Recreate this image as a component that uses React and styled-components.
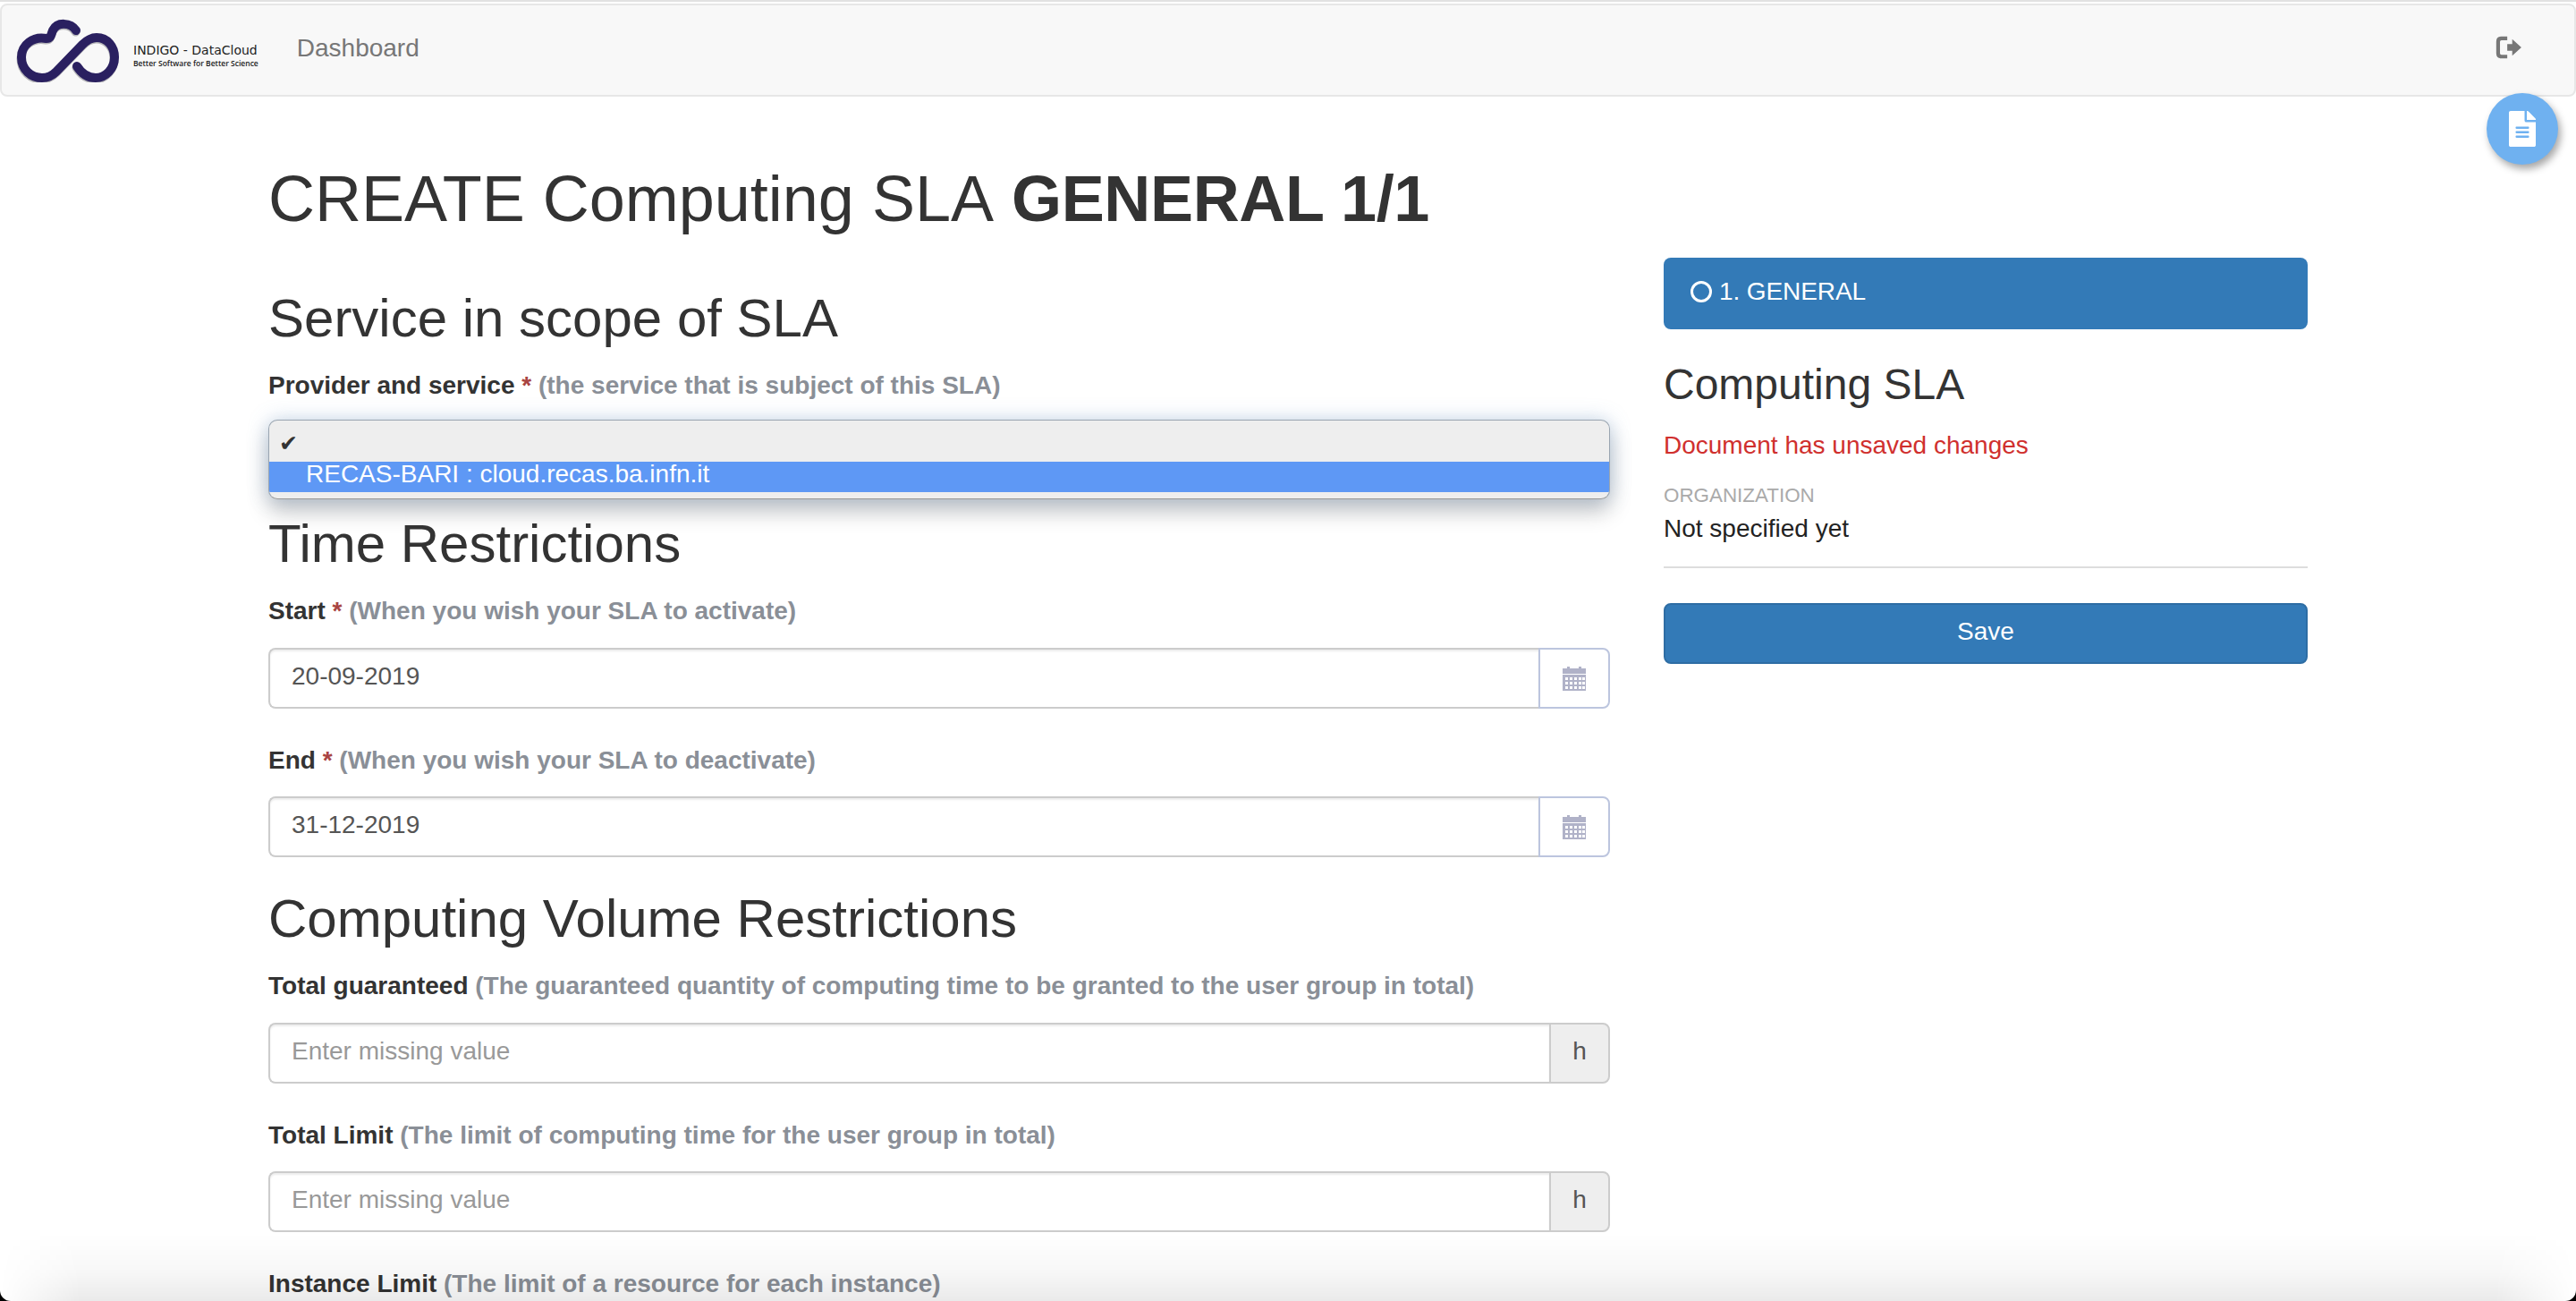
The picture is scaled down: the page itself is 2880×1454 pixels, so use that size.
import React from "react";
import styled, { createGlobalStyle } from "styled-components";
import { FaFileAlt } from "react-icons/fa";

const GlobalStyle = createGlobalStyle`
  html, body {
    margin: 0;
    padding: 0;
    height: 100%;
    overflow: hidden;
    background: #fff;
  }
  body {
    font-family: "Liberation Sans", Arial, sans-serif;
    font-size: 28px;
    color: #333;
  }
  * { box-sizing: border-box; }
`;

const Page = styled.div`
  position: relative;
  height: 1454px;
  overflow: hidden;
  padding-top: 4px;
  border-top: 2px solid #e2e2e2;
`;

const Navbar = styled.nav`
  display: flex;
  align-items: center;
  height: 104px;
  margin-top: -2px;
  background: #f8f8f8;
  border: 2px solid #e7e7e7;
  border-radius: 8px;
  padding: 0 58px 0 16px;
`;

const Brand = styled.div`
  display: flex;
  align-items: center;
  gap: 13px;
`;

const BrandText = styled.div`
  display: flex;
  flex-direction: column;
  margin-top: 12px;
  color: #222;
`;

const BrandName = styled.span`
  font-family: "DejaVu Sans", sans-serif;
  font-size: 14px;
  line-height: 18px;
  white-space: nowrap;
`;

const BrandTag = styled.span`
  font-family: "Open Sans", sans-serif;
  font-size: 8.5px;
  font-weight: 600;
  line-height: 12px;
  white-space: nowrap;
`;

const NavLink = styled.a`
  margin: -4px 0 0 43px;
  font-size: 28px;
  color: #777;
`;

const NavRight = styled.div`
  margin: -6px 0 0 auto;
  display: flex;
  color: #777;
`;

const FloatButton = styled.div`
  position: absolute;
  left: 2780px;
  top: 102px;
  width: 80px;
  height: 80px;
  border-radius: 50%;
  background: #6fb1f0;
  color: #fff;
  display: flex;
  align-items: center;
  justify-content: center;
  box-shadow: 3px 5px 8px rgba(0, 0, 0, 0.35);
  font-size: 40px;
`;

const Container = styled.main`
  width: 2280px;
  margin-left: 300px;
`;

const Title = styled.h1`
  margin: 75px 0 26px;
  font-size: 72px;
  font-weight: 500;
  line-height: 79px;
  color: #333;
  b {
    font-weight: 700;
    margin-left: 4px;
    letter-spacing: -0.35px;
  }
`;

const Columns = styled.div`
  display: grid;
  grid-template-columns: 1500px 720px;
  column-gap: 60px;
  align-items: start;
`;

const FormColumn = styled.div`
  padding-top: 35px;
`;

const SectionTitle = styled.h2`
  margin: 0;
  font-size: 60px;
  font-weight: 500;
  line-height: 66px;
  color: #333;
`;

const FieldLabel = styled.label`
  display: block;
  margin-top: ${(p) => p.$top}px;
  margin-bottom: ${(p) => p.$bottom}px;
  font-size: 28px;
  font-weight: 700;
  line-height: 40px;
  color: #333;
`;

const Star = styled.span`
  color: #a94442;
`;

const Hint = styled.span`
  color: #8a8f97;
`;

const OpenSelect = styled.div`
  height: 89px;
  margin-bottom: 17px;
  background: #eee;
  border-radius: 10px;
  border: 1px solid #9aa5b1;
  border-bottom-color: #999;
  box-shadow: 0 0 22px rgba(102, 150, 200, 0.35), 0 14px 24px rgba(0, 0, 0, 0.22);
  overflow: hidden;
  display: flex;
  flex-direction: column;
  font-size: 28px;
`;

const SelectCheck = styled.div`
  height: 46px;
  padding: 8px 0 0 11px;
  line-height: 36px;
  font-size: 25px;
  color: #333;
  font-family: "DejaVu Sans", sans-serif;
`;

const SelectOption = styled.div`
  height: 34px;
  padding-left: 41px;
  line-height: 28px;
  background: #5e98f5;
  color: #fff;
`;

const InputGroup = styled.div`
  display: flex;
  height: 68px;
`;

const TextBox = styled.div`
  flex: 1;
  display: flex;
  align-items: center;
  padding: 0 24px 4px;
  border: 2px solid #ccc;
  border-right: 0;
  border-radius: 8px 0 0 8px;
  box-shadow: inset 0 2px 2px rgba(0, 0, 0, 0.075);
  font-size: 28px;
  color: ${(p) => (p.$placeholder ? "#999" : "#555")};
`;

const Addon = styled.div`
  width: ${(p) => (p.$unit ? 68 : 80)}px;
  display: flex;
  align-items: center;
  justify-content: center;
  padding-bottom: ${(p) => (p.$unit ? 4 : 0)}px;
  border: 2px solid ${(p) => (p.$unit ? "#ccc" : "#bcc5de")};
  border-radius: 0 8px 8px 0;
  background: ${(p) => (p.$unit ? "#eee" : "#fff")};
  color: #555;
  font-size: 28px;
`;

const VolumeTitle = styled(SectionTitle)`
  margin-top: 36px;
`;

const Sidebar = styled.aside`
  display: flex;
  flex-direction: column;
`;

const StepPanel = styled.div`
  display: flex;
  align-items: center;
  gap: 8px;
  height: 80px;
  padding: 0 30px 4px;
  background: #337ab7;
  border-radius: 8px;
  color: #fff;
  font-size: 28px;
  letter-spacing: -0.1px;
`;

const StepRing = styled.span`
  width: 24px;
  height: 24px;
  border: 3px solid #fff;
  border-radius: 50%;
`;

const SideTitle = styled.h3`
  margin: 28px 0 0;
  font-size: 48px;
  font-weight: 500;
  line-height: 68px;
  color: #333;
`;

const Unsaved = styled.div`
  margin-top: 14px;
  line-height: 40px;
  color: #d0302e;
`;

const MetaLabel = styled.div`
  margin-top: 20px;
  font-size: 22.4px;
  line-height: 32px;
  color: #aaa;
`;

const MetaValue = styled.div`
  margin-top: 3px;
  line-height: 36px;
  color: #222;
`;

const Rule = styled.hr`
  width: 100%;
  margin: 24px 0 39px;
  border: 0;
  border-top: 2px solid #ddd;
`;

const SaveButton = styled.button`
  height: 68px;
  background: #337ab7;
  border: 2px solid #2e6da4;
  border-radius: 8px;
  color: #fff;
  font-family: inherit;
  font-size: 28px;
  padding: 0 0 5px;
`;

const WindowEdge = styled.div`
  position: absolute;
  inset: 0;
  pointer-events: none;
  border-radius: 0 0 12px 12px;
  box-shadow: 0 0 0 14px #000;
  overflow: hidden;

  &::before {
    content: "";
    position: absolute;
    inset: 0;
    background: linear-gradient(to bottom, rgba(0, 0, 0, 0) 1376px, rgba(0, 0, 0, 0.03) 1420px, rgba(0, 0, 0, 0.085) 1454px);
    mask-image: linear-gradient(to right, transparent, #000 90px, #000 2790px, transparent);
  }
`;

const LOGO_PATH =
  "M85 32 C79 23 64 22 59 32 C57 37 57 41 52 41 C37 38 24 48 24 62 C24 76 35 85 47 85 C54 85 59 82 63 78 L92 48 C98 42 103 40 108 40 C120 40 128 50 128 62 C128 75 118 85 107 85 C97 85 91 80 86 72";

const Logo = () => (
  <svg width="118" height="72" viewBox="18 18 118 72" fill="none">
    <path d={LOGO_PATH} stroke="#b5b5b8" strokeWidth="10" strokeLinecap="round" transform="translate(-0.5 1.5)" />
    <path d={LOGO_PATH} stroke="#2a2060" strokeWidth="10" strokeLinecap="round" />
  </svg>
);

const LogoutIcon = () => (
  <svg width="30" height="26" viewBox="0 0 32 28" fill="none">
    <path d="M14 3 H7 Q3 3 3 7 V21 Q3 25 7 25 H14" stroke="currentColor" strokeWidth="4.5" />
    <path d="M14 10 H20 V4 L31 14 L20 24 V18 H14 Z" fill="currentColor" />
  </svg>
);

const CalendarIcon = () => (
  <svg width="28" height="28" viewBox="0 0 28 28">
    <path
      fillRule="evenodd"
      fill="#b0b2c8"
      d="M1 3 H6 V1 H9 V3 H19 V1 H22 V3 H27 V9 H1 Z M1 10 H27 V28 H1 Z M4 13 V16 H7 V13 Z M9 13 V16 H12 V13 Z M14 13 V16 H17 V13 Z M19 13 V16 H22 V13 Z M23 13 V16 H26 V13 Z M4 18 V21 H7 V18 Z M9 18 V21 H12 V18 Z M14 18 V21 H17 V18 Z M19 18 V21 H22 V18 Z M23 18 V21 H26 V18 Z M4 23 V26 H7 V23 Z M9 23 V26 H12 V23 Z M14 23 V26 H17 V23 Z M19 23 V26 H22 V23 Z M23 23 V26 H26 V23 Z"
    />
  </svg>
);

const App = () => {
  return (
    <Page>
      <GlobalStyle />
      <Navbar>
        <Brand>
          <Logo />
          <BrandText>
            <BrandName>INDIGO - DataCloud</BrandName>
            <BrandTag>Better Software for Better Science</BrandTag>
          </BrandText>
        </Brand>
        <NavLink>Dashboard</NavLink>
        <NavRight>
          <LogoutIcon />
        </NavRight>
      </Navbar>
      <FloatButton>
        <FaFileAlt />
      </FloatButton>

      <Container>
        <Title>
          CREATE Computing SLA <b>GENERAL 1/1</b>
        </Title>
        <Columns>
          <FormColumn>
            <SectionTitle>Service in scope of SLA</SectionTitle>
            <FieldLabel $top={22} $bottom={18}>
              Provider and service <Star>*</Star> <Hint>(the service that is subject of this SLA)</Hint>
            </FieldLabel>
            <OpenSelect>
              <SelectCheck>✔</SelectCheck>
              <SelectOption>RECAS-BARI : cloud.recas.ba.infn.it</SelectOption>
            </OpenSelect>

            <SectionTitle>Time Restrictions</SectionTitle>
            <FieldLabel $top={22} $bottom={21}>
              Start <Star>*</Star> <Hint>(When you wish your SLA to activate)</Hint>
            </FieldLabel>
            <InputGroup>
              <TextBox>20-09-2019</TextBox>
              <Addon>
                <CalendarIcon />
              </Addon>
            </InputGroup>
            <FieldLabel $top={38} $bottom={20}>
              End <Star>*</Star> <Hint>(When you wish your SLA to deactivate)</Hint>
            </FieldLabel>
            <InputGroup>
              <TextBox>31-12-2019</TextBox>
              <Addon>
                <CalendarIcon />
              </Addon>
            </InputGroup>

            <VolumeTitle>Computing Volume Restrictions</VolumeTitle>
            <FieldLabel $top={22} $bottom={21}>
              Total guaranteed <Hint>(The guaranteed quantity of computing time to be granted to the user group in total)</Hint>
            </FieldLabel>
            <InputGroup>
              <TextBox $placeholder>Enter missing value</TextBox>
              <Addon $unit>h</Addon>
            </InputGroup>
            <FieldLabel $top={38} $bottom={20}>
              Total Limit <Hint>(The limit of computing time for the user group in total)</Hint>
            </FieldLabel>
            <InputGroup>
              <TextBox $placeholder>Enter missing value</TextBox>
              <Addon $unit>h</Addon>
            </InputGroup>
            <FieldLabel $top={38} $bottom={20}>
              Instance Limit <Hint>(The limit of a resource for each instance)</Hint>
            </FieldLabel>
          </FormColumn>

          <Sidebar>
            <StepPanel>
              <StepRing />
              1. GENERAL
            </StepPanel>
            <SideTitle>Computing SLA</SideTitle>
            <Unsaved>Document has unsaved changes</Unsaved>
            <MetaLabel>ORGANIZATION</MetaLabel>
            <MetaValue>Not specified yet</MetaValue>
            <Rule />
            <SaveButton>Save</SaveButton>
          </Sidebar>
        </Columns>
      </Container>
      <WindowEdge />
    </Page>
  );
};

export default App;
